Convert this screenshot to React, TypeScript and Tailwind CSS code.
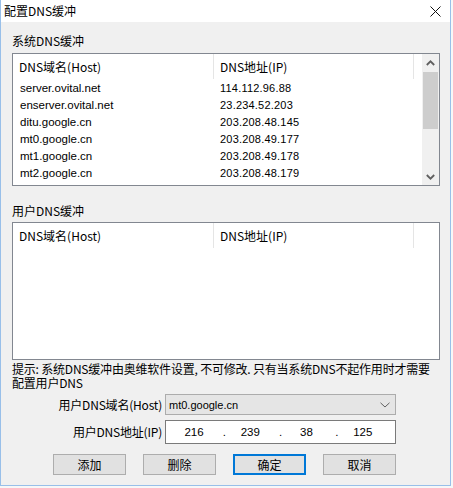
import React from "react";

const cjk = { fontFamily: '"Noto Sans CJK SC", "Liberation Sans", sans-serif' };
const latin = { fontFamily: '"Liberation Sans", Arial, sans-serif' };

const rows: [string, string][] = [
  ["server.ovital.net", "114.112.96.88"],
  ["enserver.ovital.net", "23.234.52.203"],
  ["ditu.google.cn", "203.208.48.145"],
  ["mt0.google.cn", "203.208.49.177"],
  ["mt1.google.cn", "203.208.49.178"],
  ["mt2.google.cn", "203.208.48.179"],
];

function Header() {
  return (
    <div className="h-[25px] flex text-[12px] leading-[14px] text-black" style={cjk}>
      <div className="w-[201px] h-full border-r border-[#e5e5e5] pl-[6px] flex items-center">DNS域名(Host)</div>
      <div className="w-[200px] h-full border-r border-[#e5e5e5] pl-[6px] flex items-center">DNS地址(IP)</div>
      <div className="flex-1" />
    </div>
  );
}

function Chevron({ up }: { up?: boolean }) {
  return (
    <svg width="9" height="6" viewBox="0 0 9 6">
      <polyline
        points={up ? "0.8,5 4.5,1.3 8.2,5" : "0.8,1 4.5,4.7 8.2,1"}
        fill="none"
        stroke="#606060"
        strokeWidth="1.8"
      />
    </svg>
  );
}

function Button({ label, primary }: { label: string; primary?: boolean }) {
  return (
    <div
      className={
        "w-[73px] h-[21px] flex items-center justify-center bg-[#e1e1e1] text-[12px] leading-[14px] text-black " +
        (primary ? "border-2 border-[#0078d7]" : "border border-[#adadad]")
      }
      style={cjk}
    >
      {label}
    </div>
  );
}

export default function App() {
  const ip = ["216", "239", "38", "125"];
  return (
    <div className="w-[453px] h-[488px] bg-[#f7f7f7]">
      <div className="w-[451px] h-[486px] border-l border-r border-b border-[#98bfe9] bg-[#f0f0f0] flex flex-col">
        {/* title bar */}
        <div className="h-[22px] bg-white flex items-center justify-between pl-[3px] pr-[9px] pb-[1px]">
          <span className="text-[12px] leading-[14px] text-black" style={cjk}>配置DNS缓冲</span>
          <svg width="11" height="11" viewBox="0 0 11 11" className="mt-[1px]">
            <path d="M0.5 0.5 L10.5 10.5 M10.5 0.5 L0.5 10.5" stroke="#111" strokeWidth="1" />
          </svg>
        </div>

        <div className="pl-[11px] pr-[10px] flex flex-col">
          <div className="mt-[12px] text-[12px] leading-[14px] text-black" style={cjk}>系统DNS缓冲</div>

          {/* system list */}
          <div className="mt-[5px] w-[428px] h-[133px] border border-[#828790] bg-white flex">
            <div className="flex-1 flex flex-col">
              <Header />
              {rows.map(([h, a]) => (
                <div key={h} className="h-[17px] flex items-center text-black">
                  <div className="w-[201px] pl-[7px] text-[11.5px] leading-[14px]" style={latin}>{h}</div>
                  <div className="pl-[6px] text-[11px] leading-[14px] tracking-[0.2px]" style={latin}>{a}</div>
                </div>
              ))}
            </div>
            <div className="w-[17px] h-full bg-[#f0f0f0] flex flex-col">
              <div className="h-[18px] flex items-center justify-center">
                <Chevron up />
              </div>
              <div className="h-[57px] bg-[#cdcdcd] mx-[1px]" />
              <div className="flex-1" />
              <div className="h-[17px] flex items-center justify-center">
                <Chevron />
              </div>
            </div>
          </div>

          <div className="mt-[18px] text-[12px] leading-[14px] text-black" style={cjk}>用户DNS缓冲</div>

          {/* user list */}
          <div className="mt-[4px] w-[428px] h-[138px] border border-[#828790] bg-white flex flex-col">
            <Header />
          </div>

          {/* hint */}
          <div className="mt-[2px] text-[12px] leading-[14px] tracking-[-0.2px] text-black whitespace-nowrap" style={cjk}>
            提示: 系统DNS缓冲由奥维软件设置, 不可修改. 只有当系统DNS不起作用时才需要
            <br />
            配置用户DNS
          </div>

          {/* combobox row */}
          <div className="mt-[4px] flex items-center">
            <div className="w-[150px] text-right text-[12px] leading-[14px] tracking-[-0.2px] text-black" style={cjk}>用户DNS域名(Host)</div>
            <div className="ml-[3px] w-[231px] h-[21px] border border-[#acacac] bg-[#e5e5e5] flex items-center justify-between pl-[3px] pr-[5px]">
              <span className="text-[11px] leading-[14px] text-black" style={latin}>mt0.google.cn</span>
              <svg width="10" height="6" viewBox="0 0 10 6">
                <polyline points="0.5,0.8 5,5 9.5,0.8" fill="none" stroke="#606060" strokeWidth="1" />
              </svg>
            </div>
          </div>

          {/* ip row */}
          <div className="mt-[5px] flex items-center">
            <div className="w-[150px] text-right text-[12px] leading-[14px] tracking-[-0.2px] text-black" style={cjk}>用户DNS地址(IP)</div>
            <div className="ml-[3px] w-[231px] h-[24px] border border-[#7a7a7a] bg-white flex items-center pl-[4px]">
              {ip.map((v, i) => (
                <div key={i} className="flex w-[56.3px] text-[11.5px] leading-[14px] text-black" style={latin}>
                  <div className="w-[48px] text-center">{v}</div>
                  {i < 3 && <div className="w-[8px] text-right">.</div>}
                </div>
              ))}
            </div>
          </div>

          {/* buttons */}
          <div className="mt-[10px] flex pl-[41px] gap-[17px]">
            <Button label="添加" />
            <Button label="删除" />
            <Button label="确定" primary />
            <Button label="取消" />
          </div>
        </div>
      </div>
    </div>
  );
}
